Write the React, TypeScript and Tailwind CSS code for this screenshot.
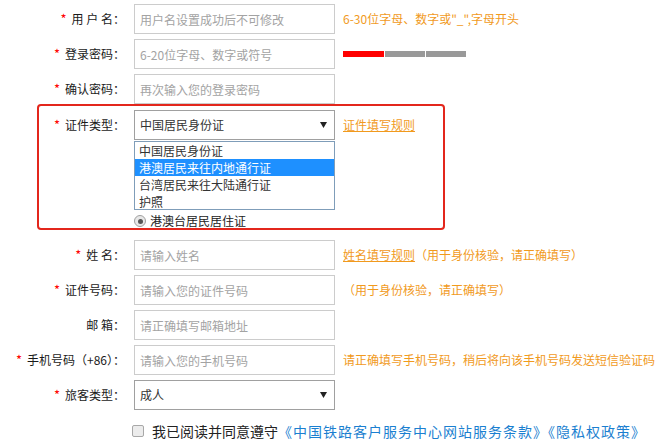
import React from "react";

interface RowProps {
  label: string;
  required?: boolean;
  children: React.ReactNode;
  hint?: React.ReactNode;
  className?: string;
}

const Row = (props: RowProps) => {
  return (
    <div className={"flex items-center h-[30px] " + (props.className || "")}>
      <div className="w-[125px] shrink-0 text-right text-[12px] text-[#1a1a1a] whitespace-nowrap">
        {props.required && <span className="text-[#f00] text-[13px] mr-[5px]">*</span>}
        {props.label}
      </div>
      <div className="ml-[9px] shrink-0">{props.children}</div>
      {props.hint && (
        <div className="ml-[8px] text-[12px] text-[#f19a1d] whitespace-nowrap">
          {props.hint}
        </div>
      )}
    </div>
  );
};

const TextInput = ({ placeholder }: { placeholder: string }) => (
  <input
    readOnly
    placeholder={placeholder}
    className="block w-[201px] h-[30px] border border-[#cccccc] bg-white px-[5px] text-[12px] text-[#333] outline-none placeholder:text-[#a3a3a3]"
  />
);

const Arrow = () => (
  <svg width="7" height="6" viewBox="0 0 7 6">
    <path d="M0 0 L7 0 L3.5 6 Z" fill="#222" />
  </svg>
);

const SelectBox = ({ value }: { value: string }) => (
  <div className="flex items-center justify-between w-[201px] h-[30px] border border-[#a0a0a0] bg-white pl-[5px] pr-[7px] text-[12px] text-[#333]">
    <span>{value}</span>
    <Arrow />
  </div>
);

const idTypes = ["中国居民身份证", "港澳居民来往内地通行证", "台湾居民来往大陆通行证", "护照"];

const App = () => {
  return (
    <div className="w-[671px] h-[444px] bg-white pt-[4px] overflow-hidden font-['Noto_Sans_CJK_SC',sans-serif]">
      <div className="flex flex-col gap-[5px]">
        <Row
          required
          label="用 户 名："
          hint={<span>6-30位字母、数字或"_",字母开头</span>}
        >
          <TextInput placeholder="用户名设置成功后不可修改" />
        </Row>
        <Row
          required
          label="登录密码："
          hint={
            <div className="flex gap-[1px]">
              <span className="block w-[41px] h-[6px] bg-[#ff0000]" />
              <span className="block w-[40px] h-[6px] bg-[#999999]" />
              <span className="block w-[40px] h-[6px] bg-[#999999]" />
            </div>
          }
        >
          <TextInput placeholder="6-20位字母、数字或符号" />
        </Row>
        <Row required label="确认密码：">
          <TextInput placeholder="再次输入您的登录密码" />
        </Row>
      </div>

      <div className="relative mt-[6px]">
        <Row
          required
          label="证件类型："
          hint={<span className="underline">证件填写规则</span>}
        >
          <SelectBox value="中国居民身份证" />
        </Row>
        <div className="h-[73px]" />
        <div className="flex items-center h-[16px] pl-[134px]">
          <span className="flex items-center justify-center w-[12px] h-[12px] rounded-full border border-[#a0a0a0] bg-[#e8e8e8]">
            <span className="block w-[5px] h-[5px] rounded-full bg-[#555]" />
          </span>
          <span className="ml-[4px] text-[12px] text-[#222]">港澳台居民居住证</span>
        </div>

        <div className="absolute left-[134px] top-[31px] w-[201px] h-[69px] border border-[#7f9db9] bg-white text-[12px] text-[#333]">
          {idTypes.map((t, i) => (
            <div
              key={t}
              className={
                i === 1
                  ? "h-[17px] leading-[17px] pl-[4px] bg-[#1e90ff] text-white"
                  : "h-[17px] leading-[17px] pl-[4px]"
              }
            >
              {t}
            </div>
          ))}
        </div>

        <div className="absolute left-[37px] top-[-6px] w-[408px] h-[126px] border-2 border-[#e3261c] rounded-[4px] pointer-events-none" />
      </div>

      <div className="flex flex-col gap-[5px] mt-[11px]">
        <Row
          required
          label="姓 名："
          hint={
            <span>
              <span className="underline">姓名填写规则</span>
              <span>（用于身份核验，请正确填写）</span>
            </span>
          }
        >
          <TextInput placeholder="请输入姓名" />
        </Row>
        <Row required label="证件号码：" hint={<span>（用于身份核验，请正确填写）</span>}>
          <TextInput placeholder="请输入您的证件号码" />
        </Row>
        <Row label="邮 箱：">
          <TextInput placeholder="请正确填写邮箱地址" />
        </Row>
        <Row
          required
          label="手机号码（+86）："
          hint={<span>请正确填写手机号码，稍后将向该手机号码发送短信验证码</span>}
        >
          <TextInput placeholder="请输入您的手机号码" />
        </Row>
        <Row required label="旅客类型：">
          <SelectBox value="成人" />
        </Row>
      </div>

      <div className="flex items-center h-[16px] mt-[13px] pl-[132px]">
        <span className="block w-[12px] h-[12px] rounded-[2px] border border-[#a8a8a8] bg-[#ececec]" />
        <span className="ml-[8px] text-[14px] text-[#222]">我已阅读并同意遵守</span>
        <span className="text-[14px] tracking-[1px] text-[#1b7fd0]">《中国铁路客户服务中心网站服务条款》《隐私权政策》</span>
      </div>
    </div>
  );
};

export default App;
